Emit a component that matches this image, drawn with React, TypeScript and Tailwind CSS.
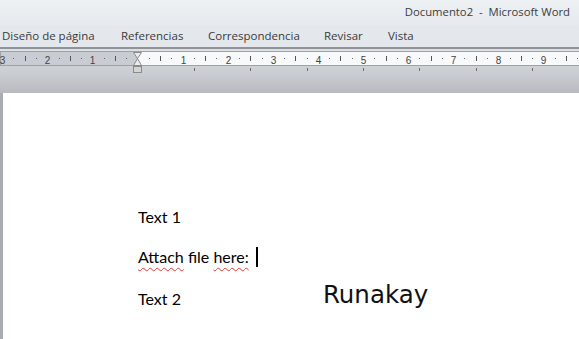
import React from "react";

const CM = 45.1;
const ZERO = 137.5;
const cmX = (cm: number) => ZERO + cm * CM;

function Ruler() {
  const marks: React.ReactNode[] = [];
  for (let q = -14; q <= 40; q++) {
    const x = Math.round(cmX(q / 4)) + 0.5;
    if (x < 0 || x > 579) continue;
    if (q % 4 === 0) {
      if (q === 0) continue;
      marks.push(
        <text key={`n${q}`} x={x} y={12.5} textAnchor="middle" fontSize="10" fill="#444" fontFamily="'Liberation Sans', sans-serif">
          {Math.abs(q / 4)}
        </text>
      );
    } else if (q % 2 === 0) {
      marks.push(<line key={`t${q}`} x1={x} x2={x} y1={5} y2={10} stroke="#555" strokeWidth={1} />);
    } else {
      marks.push(<rect key={`d${q}`} x={x - 0.5} y={7} width={1} height={1} fill="#666" />);
    }
  }
  const tabs = [1, 2, 3, 4, 5, 6, 7].map((i) => Math.round(cmX(i * 1.25)) + 0.5);

  return (
    <svg width="579" height="26" className="block">
      <rect x="0.5" y="0.5" width="137" height="14" fill="#c9cdd3" stroke="#9ea2a7" />
      <rect x="137.5" y="0.5" width="445" height="14" fill="#f8f9fa" stroke="#9ea2a7" />
      {marks}
      {tabs.map((x) => (
        <line key={x} x1={x} x2={x} y1={17} y2={20} stroke="#6a6a6a" />
      ))}
      {/* indent markers */}
      <polygon points="133.5,1.5 141.5,1.5 137.5,7.5" fill="#ececec" stroke="#8a8a8a" />
      <polygon points="137.5,7.5 133.5,14.5 141.5,14.5" fill="#ececec" stroke="#8a8a8a" />
      <rect x="133.5" y="15.5" width="8" height="6" fill="#d4d4d4" stroke="#8a8a8a" />
    </svg>
  );
}

export default function App() {
  return (
    <div
      className="w-[579px] h-[339px] overflow-hidden flex flex-col bg-[#e3e7eb]"
      style={{ fontFamily: "'Open Sans', 'Noto Sans', sans-serif" }}
    >
      {/* Title bar */}
      <div className="h-[25px] flex items-center justify-end pr-[9px] bg-gradient-to-b from-[#eef1f4] to-[#e6e9ed]">
        <span className="text-[11.3px] text-[#3c3c3c] whitespace-pre">Documento2  -  Microsoft Word</span>
      </div>

      {/* Ribbon tabs */}
      <div className="h-[22px] flex items-center pl-[2px] text-[11.5px] text-[#3a3a3a] bg-[#e4e8ec]">
        <span className="w-[119px]">Diseño de página</span>
        <span className="w-[87px]">Referencias</span>
        <span className="w-[116px]">Correspondencia</span>
        <span className="w-[64px]">Revisar</span>
        <span>Vista</span>
      </div>
      <div className="h-[2px] bg-[#8f9398]" />
      <div className="h-[2px] bg-[#dde1e6]" />

      {/* Ruler area */}
      <div className="h-[42px] bg-gradient-to-b from-[#d3d7dc] via-[#cbcfd4] to-[#b7bbc1]">
        <Ruler />
      </div>

      {/* Page */}
      <div className="flex-1 border-l-[3px] border-[#a8acb1] bg-white pl-[135px] pt-[104px] text-[16px] text-black" style={{ fontFamily: "Lato, 'Liberation Sans', sans-serif" }}>
        <div className="h-[40px] leading-[40px]">Text 1</div>
        <div className="h-[40px] leading-[40px] flex items-center">
          <span className="underline decoration-wavy decoration-[#e53935] decoration-1 underline-offset-[4px]">Attach</span>
          <span>&nbsp;file&nbsp;</span>
          <span className="underline decoration-wavy decoration-[#e53935] decoration-1 underline-offset-[4px]">here:</span>
          <span className="ml-[7px] inline-block w-[2px] h-[20px] bg-black" />
        </div>
        <div className="h-[40px] leading-[40px] flex items-baseline">
          <span>Text 2</span>
          <span className="ml-[142px] text-[24.5px] leading-[40px] text-[#111] -translate-y-[2px]" style={{ fontFamily: "'DejaVu Sans', sans-serif" }}>
            Runakay
          </span>
        </div>
      </div>
    </div>
  );
}
